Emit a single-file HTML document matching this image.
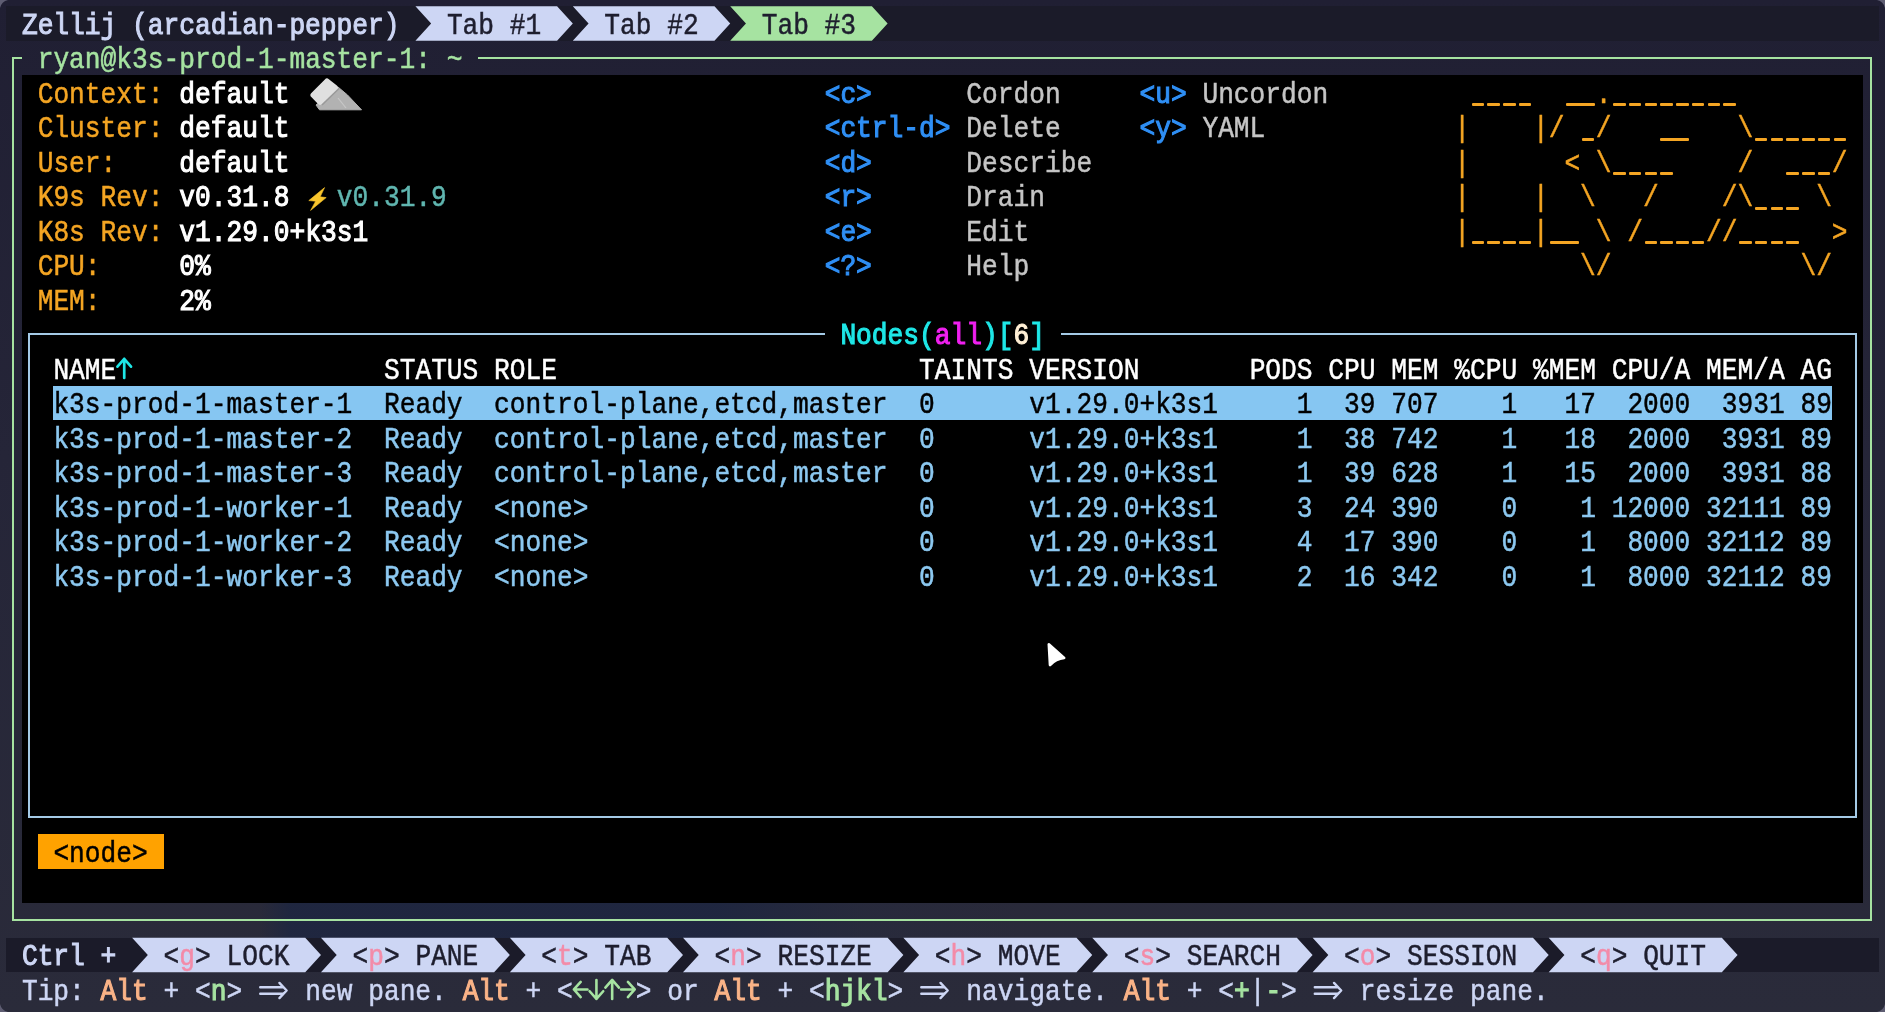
<!DOCTYPE html><html><head><meta charset="utf-8"><style>
html,body{margin:0;padding:0;}
body{width:1885px;height:1012px;overflow:hidden;position:relative;background:linear-gradient(180deg,#201f33 0%,#252538 45%,#2a2b3a 100%);font-family:"Liberation Mono",monospace;}
.r{position:absolute;}
.t{position:absolute;white-space:pre;font-size:26.233px;line-height:34.5px;height:34.5px;transform-origin:0 50%;}
.t{-webkit-text-stroke:0.45px currentColor;}
.t.b{-webkit-text-stroke:1.0px currentColor;}
svg{position:absolute;left:0;top:0;}

</style></head><body>
<div class="r" style="left:260.00px;top:903.20px;width:760.00px;height:34.50px;background:linear-gradient(90deg, rgba(30,38,64,0) 0%, rgba(30,38,64,0.9) 4%, rgba(30,38,64,0.9) 60%, rgba(38,42,62,0.5) 80%, rgba(30,38,64,0) 100%);"></div>
<div class="r" style="left:6.18px;top:6.20px;width:1873.06px;height:34.50px;background:#1b1b29;"></div>
<div class="r" style="left:12.45px;top:56.95px;width:9.47px;height:2.00px;background:#a6e3a1;"></div>
<div class="r" style="left:478.38px;top:56.95px;width:1393.99px;height:2.00px;background:#a6e3a1;"></div>
<div class="r" style="left:12.45px;top:56.95px;width:2.00px;height:864.50px;background:#a6e3a1;"></div>
<div class="r" style="left:1870.37px;top:56.95px;width:2.00px;height:864.50px;background:#a6e3a1;"></div>
<div class="r" style="left:12.45px;top:919.45px;width:1859.92px;height:2.00px;background:#a6e3a1;"></div>
<div class="r" style="left:21.92px;top:75.20px;width:1841.58px;height:828.00px;background:#000000;"></div>
<div class="r" style="left:1471.50px;top:103.10px;width:12.60px;height:3.00px;background:#f4a523;border-radius:1px;"></div>
<div class="r" style="left:1487.24px;top:103.10px;width:12.60px;height:3.00px;background:#f4a523;border-radius:1px;"></div>
<div class="r" style="left:1502.98px;top:103.10px;width:12.60px;height:3.00px;background:#f4a523;border-radius:1px;"></div>
<div class="r" style="left:1518.72px;top:103.10px;width:12.60px;height:3.00px;background:#f4a523;border-radius:1px;"></div>
<div class="r" style="left:1565.94px;top:103.10px;width:28.98px;height:3.00px;background:#f4a523;border-radius:1px;"></div>
<div class="r" style="left:1613.16px;top:103.10px;width:12.60px;height:3.00px;background:#f4a523;border-radius:1px;"></div>
<div class="r" style="left:1628.90px;top:103.10px;width:12.60px;height:3.00px;background:#f4a523;border-radius:1px;"></div>
<div class="r" style="left:1644.64px;top:103.10px;width:12.60px;height:3.00px;background:#f4a523;border-radius:1px;"></div>
<div class="r" style="left:1660.38px;top:103.10px;width:12.60px;height:3.00px;background:#f4a523;border-radius:1px;"></div>
<div class="r" style="left:1676.12px;top:103.10px;width:12.60px;height:3.00px;background:#f4a523;border-radius:1px;"></div>
<div class="r" style="left:1691.86px;top:103.10px;width:12.60px;height:3.00px;background:#f4a523;border-radius:1px;"></div>
<div class="r" style="left:1707.60px;top:103.10px;width:12.60px;height:3.00px;background:#f4a523;border-radius:1px;"></div>
<div class="r" style="left:1723.34px;top:103.10px;width:12.60px;height:3.00px;background:#f4a523;border-radius:1px;"></div>
<div class="r" style="left:1581.68px;top:137.60px;width:12.60px;height:3.00px;background:#f4a523;border-radius:1px;"></div>
<div class="r" style="left:1660.38px;top:137.60px;width:28.98px;height:3.00px;background:#f4a523;border-radius:1px;"></div>
<div class="r" style="left:1754.82px;top:137.60px;width:12.60px;height:3.00px;background:#f4a523;border-radius:1px;"></div>
<div class="r" style="left:1770.56px;top:137.60px;width:12.60px;height:3.00px;background:#f4a523;border-radius:1px;"></div>
<div class="r" style="left:1786.30px;top:137.60px;width:12.60px;height:3.00px;background:#f4a523;border-radius:1px;"></div>
<div class="r" style="left:1802.04px;top:137.60px;width:12.60px;height:3.00px;background:#f4a523;border-radius:1px;"></div>
<div class="r" style="left:1817.78px;top:137.60px;width:12.60px;height:3.00px;background:#f4a523;border-radius:1px;"></div>
<div class="r" style="left:1833.52px;top:137.60px;width:12.60px;height:3.00px;background:#f4a523;border-radius:1px;"></div>
<div class="r" style="left:1613.16px;top:172.10px;width:12.60px;height:3.00px;background:#f4a523;border-radius:1px;"></div>
<div class="r" style="left:1628.90px;top:172.10px;width:12.60px;height:3.00px;background:#f4a523;border-radius:1px;"></div>
<div class="r" style="left:1644.64px;top:172.10px;width:12.60px;height:3.00px;background:#f4a523;border-radius:1px;"></div>
<div class="r" style="left:1660.38px;top:172.10px;width:12.60px;height:3.00px;background:#f4a523;border-radius:1px;"></div>
<div class="r" style="left:1786.30px;top:172.10px;width:12.60px;height:3.00px;background:#f4a523;border-radius:1px;"></div>
<div class="r" style="left:1802.04px;top:172.10px;width:12.60px;height:3.00px;background:#f4a523;border-radius:1px;"></div>
<div class="r" style="left:1817.78px;top:172.10px;width:12.60px;height:3.00px;background:#f4a523;border-radius:1px;"></div>
<div class="r" style="left:1754.82px;top:206.60px;width:12.60px;height:3.00px;background:#f4a523;border-radius:1px;"></div>
<div class="r" style="left:1770.56px;top:206.60px;width:12.60px;height:3.00px;background:#f4a523;border-radius:1px;"></div>
<div class="r" style="left:1786.30px;top:206.60px;width:12.60px;height:3.00px;background:#f4a523;border-radius:1px;"></div>
<div class="r" style="left:1471.50px;top:241.10px;width:12.60px;height:3.00px;background:#f4a523;border-radius:1px;"></div>
<div class="r" style="left:1487.24px;top:241.10px;width:12.60px;height:3.00px;background:#f4a523;border-radius:1px;"></div>
<div class="r" style="left:1502.98px;top:241.10px;width:12.60px;height:3.00px;background:#f4a523;border-radius:1px;"></div>
<div class="r" style="left:1518.72px;top:241.10px;width:12.60px;height:3.00px;background:#f4a523;border-radius:1px;"></div>
<div class="r" style="left:1550.20px;top:241.10px;width:28.98px;height:3.00px;background:#f4a523;border-radius:1px;"></div>
<div class="r" style="left:1644.64px;top:241.10px;width:12.60px;height:3.00px;background:#f4a523;border-radius:1px;"></div>
<div class="r" style="left:1660.38px;top:241.10px;width:12.60px;height:3.00px;background:#f4a523;border-radius:1px;"></div>
<div class="r" style="left:1676.12px;top:241.10px;width:12.60px;height:3.00px;background:#f4a523;border-radius:1px;"></div>
<div class="r" style="left:1691.86px;top:241.10px;width:12.60px;height:3.00px;background:#f4a523;border-radius:1px;"></div>
<div class="r" style="left:1739.08px;top:241.10px;width:12.60px;height:3.00px;background:#f4a523;border-radius:1px;"></div>
<div class="r" style="left:1754.82px;top:241.10px;width:12.60px;height:3.00px;background:#f4a523;border-radius:1px;"></div>
<div class="r" style="left:1770.56px;top:241.10px;width:12.60px;height:3.00px;background:#f4a523;border-radius:1px;"></div>
<div class="r" style="left:1786.30px;top:241.10px;width:12.60px;height:3.00px;background:#f4a523;border-radius:1px;"></div>
<div class="r" style="left:28.39px;top:332.95px;width:796.27px;height:2.00px;background:#a4cae6;"></div>
<div class="r" style="left:1060.76px;top:332.95px;width:795.87px;height:2.00px;background:#a4cae6;"></div>
<div class="r" style="left:28.39px;top:332.95px;width:2.00px;height:485.00px;background:#a4cae6;"></div>
<div class="r" style="left:1854.63px;top:332.95px;width:2.00px;height:485.00px;background:#a4cae6;"></div>
<div class="r" style="left:28.39px;top:815.95px;width:1828.24px;height:2.00px;background:#a4cae6;"></div>
<div class="r" style="left:53.40px;top:385.70px;width:1778.62px;height:34.50px;background:#86c6f2;"></div>
<div class="r" style="left:37.66px;top:834.20px;width:125.92px;height:34.50px;background:#ffa200;"></div>
<div class="r" style="left:6.18px;top:937.70px;width:1873.06px;height:34.50px;background:#1b1b29;"></div>
<svg width="1885" height="1012" viewBox="0 0 1885 1012"><polygon points="415.42,6.20 557.08,6.20 572.82,23.45 557.08,40.70 415.42,40.70 431.16,23.45" fill="#cdd6f4"/><polygon points="572.82,6.20 714.48,6.20 730.22,23.45 714.48,40.70 572.82,40.70 588.56,23.45" fill="#cdd6f4"/><polygon points="730.22,6.20 871.88,6.20 887.62,23.45 871.88,40.70 730.22,40.70 745.96,23.45" fill="#a6e3a1"/><polygon points="132.10,937.70 305.24,937.70 320.98,954.95 305.24,972.20 132.10,972.20 147.84,954.95" fill="#cdd6f4"/><polygon points="320.98,937.70 494.12,937.70 509.86,954.95 494.12,972.20 320.98,972.20 336.72,954.95" fill="#cdd6f4"/><polygon points="509.86,937.70 667.26,937.70 683.00,954.95 667.26,972.20 509.86,972.20 525.60,954.95" fill="#cdd6f4"/><polygon points="683.00,937.70 887.62,937.70 903.36,954.95 887.62,972.20 683.00,972.20 698.74,954.95" fill="#cdd6f4"/><polygon points="903.36,937.70 1076.50,937.70 1092.24,954.95 1076.50,972.20 903.36,972.20 919.10,954.95" fill="#cdd6f4"/><polygon points="1092.24,937.70 1296.86,937.70 1312.60,954.95 1296.86,972.20 1092.24,972.20 1107.98,954.95" fill="#cdd6f4"/><polygon points="1312.60,937.70 1532.96,937.70 1548.70,954.95 1532.96,972.20 1312.60,972.20 1328.34,954.95" fill="#cdd6f4"/><polygon points="1548.70,937.70 1721.84,937.70 1737.58,954.95 1721.84,972.20 1548.70,972.20 1564.44,954.95" fill="#cdd6f4"/><g transform="translate(124.23,368.45) rotate(0)" stroke="#1ee6e6" stroke-width="2.7" fill="none" stroke-linecap="round" stroke-linejoin="round"><path d="M0,-9.5 V9.5 M-6.8,-1.8 L0,-9.5 L6.8,-1.8"/></g><g transform="translate(580.69,989.45) rotate(270)" stroke="#a6e3a1" stroke-width="2.6" fill="none" stroke-linecap="round" stroke-linejoin="round"><path d="M0,-6.8 V6.8 M-7.6,0 L0,-6.8 L7.6,0"/></g><g transform="translate(596.43,989.45) rotate(180)" stroke="#a6e3a1" stroke-width="2.6" fill="none" stroke-linecap="round" stroke-linejoin="round"><path d="M0,-9.5 V9.5 M-6.8,-1.8 L0,-9.5 L6.8,-1.8"/></g><g transform="translate(612.17,989.45) rotate(0)" stroke="#a6e3a1" stroke-width="2.6" fill="none" stroke-linecap="round" stroke-linejoin="round"><path d="M0,-9.5 V9.5 M-6.8,-1.8 L0,-9.5 L6.8,-1.8"/></g><g transform="translate(627.91,989.45) rotate(90)" stroke="#a6e3a1" stroke-width="2.6" fill="none" stroke-linecap="round" stroke-linejoin="round"><path d="M0,-6.8 V6.8 M-7.6,0 L0,-6.8 L7.6,0"/></g><g stroke="#cdd6f4" stroke-width="2.4" fill="none" stroke-linecap="round" stroke-linejoin="round"><path d="M260.22,987.20 H283.02 M260.22,993.80 H283.02 M279.42,982.90 L286.62,990.50 L279.42,998.10"/></g><g stroke="#cdd6f4" stroke-width="2.4" fill="none" stroke-linecap="round" stroke-linejoin="round"><path d="M921.30,987.20 H944.10 M921.30,993.80 H944.10 M940.50,982.90 L947.70,990.50 L940.50,998.10"/></g><g stroke="#cdd6f4" stroke-width="2.4" fill="none" stroke-linecap="round" stroke-linejoin="round"><path d="M1314.80,987.20 H1337.60 M1314.80,993.80 H1337.60 M1334.00,982.90 L1341.20,990.50 L1334.00,998.10"/></g><polygon points="324.6,187.6 308.8,200.6 315.6,201.2 310.6,210.4 326.2,197.6 320.2,196.8" fill="#f9c52c" stroke="#f9c52c" stroke-width="0.6" stroke-linejoin="round"/><polygon points="338,87 347.5,95 361.5,109.8 319.5,109.8 316,105" fill="#b2b2b2" stroke="#b2b2b2" stroke-width="1" stroke-linejoin="round"/><polygon points="327,81.5 335,87.8 320,101.8 313.5,95" fill="#e0e0e0" stroke="#e0e0e0" stroke-width="6" stroke-linejoin="round"/><path d="M339,88.5 L322,105" stroke="#9a9a9a" stroke-width="1.6"/><path d="M338,98 L346,108" stroke="#c8c8c8" stroke-width="1.2"/><path d="M0,0 L8,0 Q1.5,1.5 0,8 Z" fill="#5e5d72"/><path d="M1885,0 L1877,0 Q1883.5,1.5 1885,8 Z" fill="#5e5d72"/><path d="M0,1012 L8,1012 Q1.5,1010.5 0,1004 Z" fill="#5e5d72"/><path d="M1885,1012 L1877,1012 Q1883.5,1010.5 1885,1004 Z" fill="#5e5d72"/><path d="M1048.8,644.2 L1064.2,657.9 Q1056,658.6 1050,665 Z" fill="#ffffff" stroke="#ffffff" stroke-width="2.6" stroke-linejoin="round"/></svg>
<div id="txt" style="position:absolute;left:0;top:0;width:1885px;height:1012px;will-change:transform;">
<div class="t b" style="left:21.92px;top:8.60px;color:#cdd6f4;transform:scaleY(1.12);">Zellij (arcadian-pepper)</div>
<div class="t" style="left:446.90px;top:8.60px;color:#1e1e2e;transform:scaleY(1.12);">Tab #1</div>
<div class="t" style="left:604.30px;top:8.60px;color:#1e1e2e;transform:scaleY(1.12);">Tab #2</div>
<div class="t" style="left:761.70px;top:8.60px;color:#1e1e2e;transform:scaleY(1.12);">Tab #3</div>
<div class="t" style="left:37.66px;top:43.10px;color:#a6e3a1;transform:scaleY(1.12);">ryan@k3s-prod-1-master-1: ~</div>
<div class="t" style="left:37.66px;top:77.60px;color:#f4a523;transform:scaleY(1.12);">Context:</div>
<div class="t b" style="left:179.32px;top:77.60px;color:#ffffff;transform:scaleY(1.12);">default</div>
<div class="t" style="left:37.66px;top:112.10px;color:#f4a523;transform:scaleY(1.12);">Cluster:</div>
<div class="t b" style="left:179.32px;top:112.10px;color:#ffffff;transform:scaleY(1.12);">default</div>
<div class="t" style="left:37.66px;top:146.60px;color:#f4a523;transform:scaleY(1.12);">User:</div>
<div class="t b" style="left:179.32px;top:146.60px;color:#ffffff;transform:scaleY(1.12);">default</div>
<div class="t" style="left:37.66px;top:181.10px;color:#f4a523;transform:scaleY(1.12);">K9s Rev:</div>
<div class="t b" style="left:179.32px;top:181.10px;color:#ffffff;transform:scaleY(1.12);">v0.31.8</div>
<div class="t" style="left:37.66px;top:215.60px;color:#f4a523;transform:scaleY(1.12);">K8s Rev:</div>
<div class="t b" style="left:179.32px;top:215.60px;color:#ffffff;transform:scaleY(1.12);">v1.29.0+k3s1</div>
<div class="t" style="left:37.66px;top:250.10px;color:#f4a523;transform:scaleY(1.12);">CPU:</div>
<div class="t b" style="left:179.32px;top:250.10px;color:#ffffff;transform:scaleY(1.12);">0%</div>
<div class="t" style="left:37.66px;top:284.60px;color:#f4a523;transform:scaleY(1.12);">MEM:</div>
<div class="t b" style="left:179.32px;top:284.60px;color:#ffffff;transform:scaleY(1.12);">2%</div>
<div class="t" style="left:336.72px;top:181.10px;color:#60b6b0;transform:scaleY(1.12);">v0.31.9</div>
<div class="t b" style="left:824.66px;top:77.60px;color:#2f8ff5;transform:scaleY(1.12);">&lt;c&gt;</div>
<div class="t" style="left:966.32px;top:77.60px;color:#c5c5c5;transform:scaleY(1.12);">Cordon</div>
<div class="t b" style="left:824.66px;top:112.10px;color:#2f8ff5;transform:scaleY(1.12);">&lt;ctrl-d&gt;</div>
<div class="t" style="left:966.32px;top:112.10px;color:#c5c5c5;transform:scaleY(1.12);">Delete</div>
<div class="t b" style="left:824.66px;top:146.60px;color:#2f8ff5;transform:scaleY(1.12);">&lt;d&gt;</div>
<div class="t" style="left:966.32px;top:146.60px;color:#c5c5c5;transform:scaleY(1.12);">Describe</div>
<div class="t b" style="left:824.66px;top:181.10px;color:#2f8ff5;transform:scaleY(1.12);">&lt;r&gt;</div>
<div class="t" style="left:966.32px;top:181.10px;color:#c5c5c5;transform:scaleY(1.12);">Drain</div>
<div class="t b" style="left:824.66px;top:215.60px;color:#2f8ff5;transform:scaleY(1.12);">&lt;e&gt;</div>
<div class="t" style="left:966.32px;top:215.60px;color:#c5c5c5;transform:scaleY(1.12);">Edit</div>
<div class="t b" style="left:824.66px;top:250.10px;color:#2f8ff5;transform:scaleY(1.12);">&lt;?&gt;</div>
<div class="t" style="left:966.32px;top:250.10px;color:#c5c5c5;transform:scaleY(1.12);">Help</div>
<div class="t b" style="left:1139.46px;top:77.60px;color:#2f8ff5;transform:scaleY(1.12);">&lt;u&gt;</div>
<div class="t" style="left:1202.42px;top:77.60px;color:#c5c5c5;transform:scaleY(1.12);">Uncordon</div>
<div class="t b" style="left:1139.46px;top:112.10px;color:#2f8ff5;transform:scaleY(1.12);">&lt;y&gt;</div>
<div class="t" style="left:1202.42px;top:112.10px;color:#c5c5c5;transform:scaleY(1.12);">YAML</div>
<div class="t" style="left:1454.26px;top:77.60px;color:#f4a523;transform:scaleY(1.12);">         .               </div>
<div class="t" style="left:1454.26px;top:112.10px;color:#f4a523;transform:scaleY(1.12);">|    |/  /        \      </div>
<div class="t" style="left:1454.26px;top:146.60px;color:#f4a523;transform:scaleY(1.12);">|      &lt; \        /     /</div>
<div class="t" style="left:1454.26px;top:181.10px;color:#f4a523;transform:scaleY(1.12);">|    |  \   /    /\    \ </div>
<div class="t" style="left:1454.26px;top:215.60px;color:#f4a523;transform:scaleY(1.12);">|    |   \ /    //      &gt;</div>
<div class="t" style="left:1454.26px;top:250.10px;color:#f4a523;transform:scaleY(1.12);">        \/            \/ </div>
<div class="t b" style="left:840.40px;top:319.10px;color:#1ee6e6;transform:scaleY(1.12);">Nodes(</div>
<div class="t b" style="left:934.84px;top:319.10px;color:#f020f0;transform:scaleY(1.12);">all</div>
<div class="t b" style="left:982.06px;top:319.10px;color:#1ee6e6;transform:scaleY(1.12);">)[</div>
<div class="t b" style="left:1013.54px;top:319.10px;color:#ffefd5;transform:scaleY(1.12);">6</div>
<div class="t b" style="left:1029.28px;top:319.10px;color:#1ee6e6;transform:scaleY(1.12);">]</div>
<div class="t" style="left:53.40px;top:353.60px;color:#ffffff;transform:scaleY(1.12);">NAME</div>
<div class="t" style="left:383.94px;top:353.60px;color:#ffffff;transform:scaleY(1.12);">STATUS</div>
<div class="t" style="left:494.12px;top:353.60px;color:#ffffff;transform:scaleY(1.12);">ROLE</div>
<div class="t" style="left:919.10px;top:353.60px;color:#ffffff;transform:scaleY(1.12);">TAINTS</div>
<div class="t" style="left:1029.28px;top:353.60px;color:#ffffff;transform:scaleY(1.12);">VERSION</div>
<div class="t" style="left:1249.64px;top:353.60px;color:#ffffff;transform:scaleY(1.12);">PODS</div>
<div class="t" style="left:1328.34px;top:353.60px;color:#ffffff;transform:scaleY(1.12);">CPU</div>
<div class="t" style="left:1391.30px;top:353.60px;color:#ffffff;transform:scaleY(1.12);">MEM</div>
<div class="t" style="left:1454.26px;top:353.60px;color:#ffffff;transform:scaleY(1.12);">%CPU</div>
<div class="t" style="left:1532.96px;top:353.60px;color:#ffffff;transform:scaleY(1.12);">%MEM</div>
<div class="t" style="left:1611.66px;top:353.60px;color:#ffffff;transform:scaleY(1.12);">CPU/A</div>
<div class="t" style="left:1706.10px;top:353.60px;color:#ffffff;transform:scaleY(1.12);">MEM/A</div>
<div class="t" style="left:1800.54px;top:353.60px;color:#ffffff;transform:scaleY(1.12);">AG</div>
<div class="t" style="left:53.40px;top:388.10px;color:#000000;transform:scaleY(1.12);">k3s-prod-1-master-1</div>
<div class="t" style="left:383.94px;top:388.10px;color:#000000;transform:scaleY(1.12);">Ready</div>
<div class="t" style="left:494.12px;top:388.10px;color:#000000;transform:scaleY(1.12);">control-plane,etcd,master</div>
<div class="t" style="left:919.10px;top:388.10px;color:#000000;transform:scaleY(1.12);">0</div>
<div class="t" style="left:1029.28px;top:388.10px;color:#000000;transform:scaleY(1.12);">v1.29.0+k3s1</div>
<div class="t" style="left:1296.86px;top:388.10px;color:#000000;transform:scaleY(1.12);">1</div>
<div class="t" style="left:1344.08px;top:388.10px;color:#000000;transform:scaleY(1.12);">39</div>
<div class="t" style="left:1391.30px;top:388.10px;color:#000000;transform:scaleY(1.12);">707</div>
<div class="t" style="left:1501.48px;top:388.10px;color:#000000;transform:scaleY(1.12);">1</div>
<div class="t" style="left:1564.44px;top:388.10px;color:#000000;transform:scaleY(1.12);">17</div>
<div class="t" style="left:1627.40px;top:388.10px;color:#000000;transform:scaleY(1.12);">2000</div>
<div class="t" style="left:1721.84px;top:388.10px;color:#000000;transform:scaleY(1.12);">3931</div>
<div class="t" style="left:1800.54px;top:388.10px;color:#000000;transform:scaleY(1.12);">89</div>
<div class="t" style="left:53.40px;top:422.60px;color:#8cc8f0;transform:scaleY(1.12);">k3s-prod-1-master-2</div>
<div class="t" style="left:383.94px;top:422.60px;color:#8cc8f0;transform:scaleY(1.12);">Ready</div>
<div class="t" style="left:494.12px;top:422.60px;color:#8cc8f0;transform:scaleY(1.12);">control-plane,etcd,master</div>
<div class="t" style="left:919.10px;top:422.60px;color:#8cc8f0;transform:scaleY(1.12);">0</div>
<div class="t" style="left:1029.28px;top:422.60px;color:#8cc8f0;transform:scaleY(1.12);">v1.29.0+k3s1</div>
<div class="t" style="left:1296.86px;top:422.60px;color:#8cc8f0;transform:scaleY(1.12);">1</div>
<div class="t" style="left:1344.08px;top:422.60px;color:#8cc8f0;transform:scaleY(1.12);">38</div>
<div class="t" style="left:1391.30px;top:422.60px;color:#8cc8f0;transform:scaleY(1.12);">742</div>
<div class="t" style="left:1501.48px;top:422.60px;color:#8cc8f0;transform:scaleY(1.12);">1</div>
<div class="t" style="left:1564.44px;top:422.60px;color:#8cc8f0;transform:scaleY(1.12);">18</div>
<div class="t" style="left:1627.40px;top:422.60px;color:#8cc8f0;transform:scaleY(1.12);">2000</div>
<div class="t" style="left:1721.84px;top:422.60px;color:#8cc8f0;transform:scaleY(1.12);">3931</div>
<div class="t" style="left:1800.54px;top:422.60px;color:#8cc8f0;transform:scaleY(1.12);">89</div>
<div class="t" style="left:53.40px;top:457.10px;color:#8cc8f0;transform:scaleY(1.12);">k3s-prod-1-master-3</div>
<div class="t" style="left:383.94px;top:457.10px;color:#8cc8f0;transform:scaleY(1.12);">Ready</div>
<div class="t" style="left:494.12px;top:457.10px;color:#8cc8f0;transform:scaleY(1.12);">control-plane,etcd,master</div>
<div class="t" style="left:919.10px;top:457.10px;color:#8cc8f0;transform:scaleY(1.12);">0</div>
<div class="t" style="left:1029.28px;top:457.10px;color:#8cc8f0;transform:scaleY(1.12);">v1.29.0+k3s1</div>
<div class="t" style="left:1296.86px;top:457.10px;color:#8cc8f0;transform:scaleY(1.12);">1</div>
<div class="t" style="left:1344.08px;top:457.10px;color:#8cc8f0;transform:scaleY(1.12);">39</div>
<div class="t" style="left:1391.30px;top:457.10px;color:#8cc8f0;transform:scaleY(1.12);">628</div>
<div class="t" style="left:1501.48px;top:457.10px;color:#8cc8f0;transform:scaleY(1.12);">1</div>
<div class="t" style="left:1564.44px;top:457.10px;color:#8cc8f0;transform:scaleY(1.12);">15</div>
<div class="t" style="left:1627.40px;top:457.10px;color:#8cc8f0;transform:scaleY(1.12);">2000</div>
<div class="t" style="left:1721.84px;top:457.10px;color:#8cc8f0;transform:scaleY(1.12);">3931</div>
<div class="t" style="left:1800.54px;top:457.10px;color:#8cc8f0;transform:scaleY(1.12);">88</div>
<div class="t" style="left:53.40px;top:491.60px;color:#8cc8f0;transform:scaleY(1.12);">k3s-prod-1-worker-1</div>
<div class="t" style="left:383.94px;top:491.60px;color:#8cc8f0;transform:scaleY(1.12);">Ready</div>
<div class="t" style="left:494.12px;top:491.60px;color:#8cc8f0;transform:scaleY(1.12);">&lt;none&gt;</div>
<div class="t" style="left:919.10px;top:491.60px;color:#8cc8f0;transform:scaleY(1.12);">0</div>
<div class="t" style="left:1029.28px;top:491.60px;color:#8cc8f0;transform:scaleY(1.12);">v1.29.0+k3s1</div>
<div class="t" style="left:1296.86px;top:491.60px;color:#8cc8f0;transform:scaleY(1.12);">3</div>
<div class="t" style="left:1344.08px;top:491.60px;color:#8cc8f0;transform:scaleY(1.12);">24</div>
<div class="t" style="left:1391.30px;top:491.60px;color:#8cc8f0;transform:scaleY(1.12);">390</div>
<div class="t" style="left:1501.48px;top:491.60px;color:#8cc8f0;transform:scaleY(1.12);">0</div>
<div class="t" style="left:1580.18px;top:491.60px;color:#8cc8f0;transform:scaleY(1.12);">1</div>
<div class="t" style="left:1611.66px;top:491.60px;color:#8cc8f0;transform:scaleY(1.12);">12000</div>
<div class="t" style="left:1706.10px;top:491.60px;color:#8cc8f0;transform:scaleY(1.12);">32111</div>
<div class="t" style="left:1800.54px;top:491.60px;color:#8cc8f0;transform:scaleY(1.12);">89</div>
<div class="t" style="left:53.40px;top:526.10px;color:#8cc8f0;transform:scaleY(1.12);">k3s-prod-1-worker-2</div>
<div class="t" style="left:383.94px;top:526.10px;color:#8cc8f0;transform:scaleY(1.12);">Ready</div>
<div class="t" style="left:494.12px;top:526.10px;color:#8cc8f0;transform:scaleY(1.12);">&lt;none&gt;</div>
<div class="t" style="left:919.10px;top:526.10px;color:#8cc8f0;transform:scaleY(1.12);">0</div>
<div class="t" style="left:1029.28px;top:526.10px;color:#8cc8f0;transform:scaleY(1.12);">v1.29.0+k3s1</div>
<div class="t" style="left:1296.86px;top:526.10px;color:#8cc8f0;transform:scaleY(1.12);">4</div>
<div class="t" style="left:1344.08px;top:526.10px;color:#8cc8f0;transform:scaleY(1.12);">17</div>
<div class="t" style="left:1391.30px;top:526.10px;color:#8cc8f0;transform:scaleY(1.12);">390</div>
<div class="t" style="left:1501.48px;top:526.10px;color:#8cc8f0;transform:scaleY(1.12);">0</div>
<div class="t" style="left:1580.18px;top:526.10px;color:#8cc8f0;transform:scaleY(1.12);">1</div>
<div class="t" style="left:1627.40px;top:526.10px;color:#8cc8f0;transform:scaleY(1.12);">8000</div>
<div class="t" style="left:1706.10px;top:526.10px;color:#8cc8f0;transform:scaleY(1.12);">32112</div>
<div class="t" style="left:1800.54px;top:526.10px;color:#8cc8f0;transform:scaleY(1.12);">89</div>
<div class="t" style="left:53.40px;top:560.60px;color:#8cc8f0;transform:scaleY(1.12);">k3s-prod-1-worker-3</div>
<div class="t" style="left:383.94px;top:560.60px;color:#8cc8f0;transform:scaleY(1.12);">Ready</div>
<div class="t" style="left:494.12px;top:560.60px;color:#8cc8f0;transform:scaleY(1.12);">&lt;none&gt;</div>
<div class="t" style="left:919.10px;top:560.60px;color:#8cc8f0;transform:scaleY(1.12);">0</div>
<div class="t" style="left:1029.28px;top:560.60px;color:#8cc8f0;transform:scaleY(1.12);">v1.29.0+k3s1</div>
<div class="t" style="left:1296.86px;top:560.60px;color:#8cc8f0;transform:scaleY(1.12);">2</div>
<div class="t" style="left:1344.08px;top:560.60px;color:#8cc8f0;transform:scaleY(1.12);">16</div>
<div class="t" style="left:1391.30px;top:560.60px;color:#8cc8f0;transform:scaleY(1.12);">342</div>
<div class="t" style="left:1501.48px;top:560.60px;color:#8cc8f0;transform:scaleY(1.12);">0</div>
<div class="t" style="left:1580.18px;top:560.60px;color:#8cc8f0;transform:scaleY(1.12);">1</div>
<div class="t" style="left:1627.40px;top:560.60px;color:#8cc8f0;transform:scaleY(1.12);">8000</div>
<div class="t" style="left:1706.10px;top:560.60px;color:#8cc8f0;transform:scaleY(1.12);">32112</div>
<div class="t" style="left:1800.54px;top:560.60px;color:#8cc8f0;transform:scaleY(1.12);">89</div>
<div class="t" style="left:53.40px;top:836.60px;color:#000000;transform:scaleY(1.12);">&lt;node&gt;</div>
<div class="t b" style="left:21.92px;top:940.10px;color:#cdd6f4;transform:scaleY(1.12);">Ctrl +</div>
<div class="t" style="left:163.58px;top:940.10px;color:#1e1e2e;transform:scaleY(1.12);">&lt;</div>
<div class="t" style="left:179.32px;top:940.10px;color:#f38ba8;transform:scaleY(1.12);">g</div>
<div class="t" style="left:195.06px;top:940.10px;color:#1e1e2e;transform:scaleY(1.12);">&gt;</div>
<div class="t" style="left:226.54px;top:940.10px;color:#1e1e2e;transform:scaleY(1.12);">LOCK</div>
<div class="t" style="left:352.46px;top:940.10px;color:#1e1e2e;transform:scaleY(1.12);">&lt;</div>
<div class="t" style="left:368.20px;top:940.10px;color:#f38ba8;transform:scaleY(1.12);">p</div>
<div class="t" style="left:383.94px;top:940.10px;color:#1e1e2e;transform:scaleY(1.12);">&gt;</div>
<div class="t" style="left:415.42px;top:940.10px;color:#1e1e2e;transform:scaleY(1.12);">PANE</div>
<div class="t" style="left:541.34px;top:940.10px;color:#1e1e2e;transform:scaleY(1.12);">&lt;</div>
<div class="t" style="left:557.08px;top:940.10px;color:#f38ba8;transform:scaleY(1.12);">t</div>
<div class="t" style="left:572.82px;top:940.10px;color:#1e1e2e;transform:scaleY(1.12);">&gt;</div>
<div class="t" style="left:604.30px;top:940.10px;color:#1e1e2e;transform:scaleY(1.12);">TAB</div>
<div class="t" style="left:714.48px;top:940.10px;color:#1e1e2e;transform:scaleY(1.12);">&lt;</div>
<div class="t" style="left:730.22px;top:940.10px;color:#f38ba8;transform:scaleY(1.12);">n</div>
<div class="t" style="left:745.96px;top:940.10px;color:#1e1e2e;transform:scaleY(1.12);">&gt;</div>
<div class="t" style="left:777.44px;top:940.10px;color:#1e1e2e;transform:scaleY(1.12);">RESIZE</div>
<div class="t" style="left:934.84px;top:940.10px;color:#1e1e2e;transform:scaleY(1.12);">&lt;</div>
<div class="t" style="left:950.58px;top:940.10px;color:#f38ba8;transform:scaleY(1.12);">h</div>
<div class="t" style="left:966.32px;top:940.10px;color:#1e1e2e;transform:scaleY(1.12);">&gt;</div>
<div class="t" style="left:997.80px;top:940.10px;color:#1e1e2e;transform:scaleY(1.12);">MOVE</div>
<div class="t" style="left:1123.72px;top:940.10px;color:#1e1e2e;transform:scaleY(1.12);">&lt;</div>
<div class="t" style="left:1139.46px;top:940.10px;color:#f38ba8;transform:scaleY(1.12);">s</div>
<div class="t" style="left:1155.20px;top:940.10px;color:#1e1e2e;transform:scaleY(1.12);">&gt;</div>
<div class="t" style="left:1186.68px;top:940.10px;color:#1e1e2e;transform:scaleY(1.12);">SEARCH</div>
<div class="t" style="left:1344.08px;top:940.10px;color:#1e1e2e;transform:scaleY(1.12);">&lt;</div>
<div class="t" style="left:1359.82px;top:940.10px;color:#f38ba8;transform:scaleY(1.12);">o</div>
<div class="t" style="left:1375.56px;top:940.10px;color:#1e1e2e;transform:scaleY(1.12);">&gt;</div>
<div class="t" style="left:1407.04px;top:940.10px;color:#1e1e2e;transform:scaleY(1.12);">SESSION</div>
<div class="t" style="left:1580.18px;top:940.10px;color:#1e1e2e;transform:scaleY(1.12);">&lt;</div>
<div class="t" style="left:1595.92px;top:940.10px;color:#f38ba8;transform:scaleY(1.12);">q</div>
<div class="t" style="left:1611.66px;top:940.10px;color:#1e1e2e;transform:scaleY(1.12);">&gt;</div>
<div class="t" style="left:1643.14px;top:940.10px;color:#1e1e2e;transform:scaleY(1.12);">QUIT</div>
<div class="t" style="left:21.92px;top:974.60px;color:#cdd6f4;transform:scaleY(1.12);">Tip:</div>
<div class="t b" style="left:100.62px;top:974.60px;color:#fab387;transform:scaleY(1.12);">Alt</div>
<div class="t" style="left:163.58px;top:974.60px;color:#cdd6f4;transform:scaleY(1.12);">+</div>
<div class="t" style="left:195.06px;top:974.60px;color:#cdd6f4;transform:scaleY(1.12);">&lt;</div>
<div class="t b" style="left:210.80px;top:974.60px;color:#a6e3a1;transform:scaleY(1.12);">n</div>
<div class="t" style="left:226.54px;top:974.60px;color:#cdd6f4;transform:scaleY(1.12);">&gt;</div>
<div class="t" style="left:305.24px;top:974.60px;color:#cdd6f4;transform:scaleY(1.12);">new pane.</div>
<div class="t b" style="left:462.64px;top:974.60px;color:#fab387;transform:scaleY(1.12);">Alt</div>
<div class="t" style="left:525.60px;top:974.60px;color:#cdd6f4;transform:scaleY(1.12);">+</div>
<div class="t" style="left:557.08px;top:974.60px;color:#cdd6f4;transform:scaleY(1.12);">&lt;</div>
<div class="t" style="left:635.78px;top:974.60px;color:#cdd6f4;transform:scaleY(1.12);">&gt;</div>
<div class="t" style="left:667.26px;top:974.60px;color:#cdd6f4;transform:scaleY(1.12);">or</div>
<div class="t b" style="left:714.48px;top:974.60px;color:#fab387;transform:scaleY(1.12);">Alt</div>
<div class="t" style="left:777.44px;top:974.60px;color:#cdd6f4;transform:scaleY(1.12);">+</div>
<div class="t" style="left:808.92px;top:974.60px;color:#cdd6f4;transform:scaleY(1.12);">&lt;</div>
<div class="t b" style="left:824.66px;top:974.60px;color:#a6e3a1;transform:scaleY(1.12);">hjkl</div>
<div class="t" style="left:887.62px;top:974.60px;color:#cdd6f4;transform:scaleY(1.12);">&gt;</div>
<div class="t" style="left:966.32px;top:974.60px;color:#cdd6f4;transform:scaleY(1.12);">navigate.</div>
<div class="t b" style="left:1123.72px;top:974.60px;color:#fab387;transform:scaleY(1.12);">Alt</div>
<div class="t" style="left:1186.68px;top:974.60px;color:#cdd6f4;transform:scaleY(1.12);">+</div>
<div class="t" style="left:1218.16px;top:974.60px;color:#cdd6f4;transform:scaleY(1.12);">&lt;</div>
<div class="t b" style="left:1233.90px;top:974.60px;color:#a6e3a1;transform:scaleY(1.12);">+</div>
<div class="t" style="left:1249.64px;top:974.60px;color:#cdd6f4;transform:scaleY(1.12);">|</div>
<div class="t b" style="left:1265.38px;top:974.60px;color:#a6e3a1;transform:scaleY(1.12);">-</div>
<div class="t" style="left:1281.12px;top:974.60px;color:#cdd6f4;transform:scaleY(1.12);">&gt;</div>
<div class="t" style="left:1359.82px;top:974.60px;color:#cdd6f4;transform:scaleY(1.12);">resize pane.</div>
</div>
</body></html>
